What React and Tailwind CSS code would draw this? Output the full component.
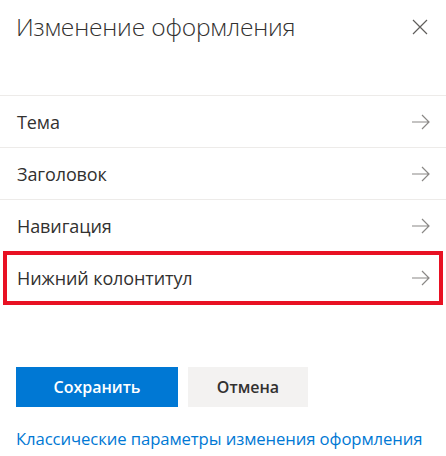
const rows = ["Тема", "Заголовок", "Навигация", "Нижний колонтитул"];

function Arrow() {
  return (
    <svg width="20" height="16" viewBox="0 0 20 16" className="text-[#8a8886]">
      <path d="M1 8h17M11 1l7 7-7 7" fill="none" stroke="currentColor" strokeWidth="1.2" />
    </svg>
  );
}

export default function App() {
  return (
    <div
      className="w-[446px] h-[456px] bg-white text-[#323130] overflow-hidden"
      style={{ fontFamily: '"Open Sans", "Noto Sans", sans-serif' }}
    >
      <div className="h-[95px] flex items-start justify-between pl-[16px] pr-[17px] pt-[11px]">
        <h1 className="text-[24.6px] font-light leading-[32px] tracking-[-0.2px]">Изменение оформления</h1>
        <button className="mt-[7px] w-[18px] h-[18px] flex items-center justify-center text-[#605e5c]">
          <svg width="16" height="16" viewBox="0 0 16 16">
            <path d="M1 1l14 14M15 1L1 15" stroke="currentColor" strokeWidth="1.2" fill="none" />
          </svg>
        </button>
      </div>

      <div className="border-t border-[#edebe9]">
        {rows.map((label, i) => (
          <div
            key={label}
            className={`relative h-[52px] flex items-center justify-between pl-[17px] pr-[15px] ${
              i < 2 ? "border-b border-[#edebe9]" : ""
            }`}
          >
            <span className="text-[18px] leading-[24px] tracking-[-0.1px]">{label}</span>
            <Arrow />
            {i === 3 && (
              <div className="absolute left-[3px] right-[3px] top-[-1px] bottom-[-1px] border-4 border-[#e81123]" />
            )}
          </div>
        ))}
      </div>

      <div className="flex gap-[10px] pl-[16px] mt-[63px]">
        <button className="w-[162px] h-[40px] bg-[#0078d4] text-white text-[16px] font-semibold">
          Сохранить
        </button>
        <button className="w-[120px] h-[40px] bg-[#f3f2f1] text-[#323130] text-[16px] font-semibold">
          Отмена
        </button>
      </div>

      <a className="block pl-[16px] mt-[22px] text-[16.7px] leading-[20px] text-[#0078d4] tracking-[-0.1px]">
        Классические параметры изменения оформления
      </a>
    </div>
  );
}
